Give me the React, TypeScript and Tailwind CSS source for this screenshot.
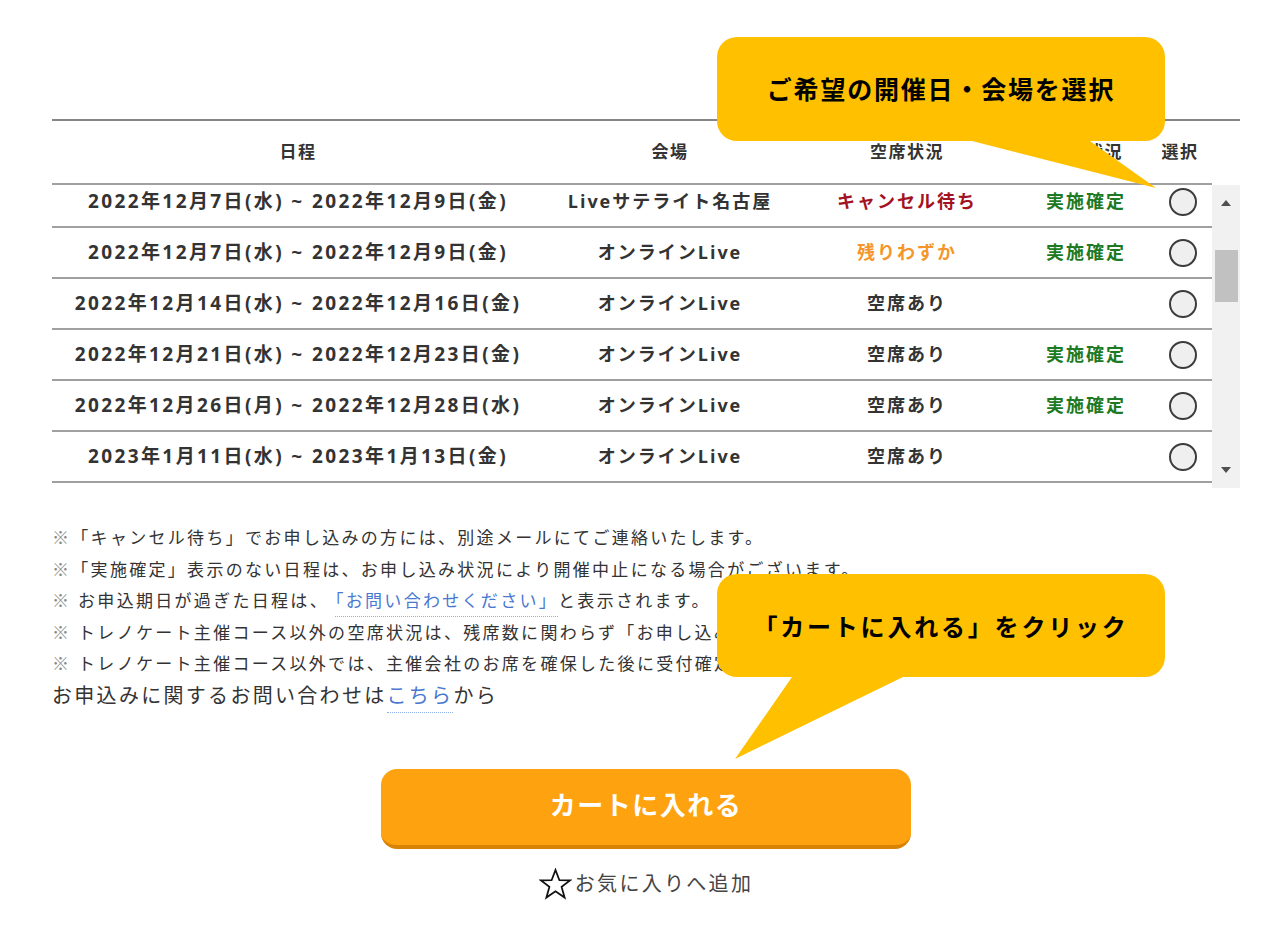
import React from 'react';

type Row = {
  date: string;
  venue: string;
  seat: string;
  seatTone: 'red' | 'orange' | 'plain';
  confirmed: boolean;
};

const rows: Row[] = [
  { date: '2022年12月7日(水) ~ 2022年12月9日(金)', venue: 'Liveサテライト名古屋', seat: 'キャンセル待ち', seatTone: 'red', confirmed: true },
  { date: '2022年12月7日(水) ~ 2022年12月9日(金)', venue: 'オンラインLive', seat: '残りわずか', seatTone: 'orange', confirmed: true },
  { date: '2022年12月14日(水) ~ 2022年12月16日(金)', venue: 'オンラインLive', seat: '空席あり', seatTone: 'plain', confirmed: false },
  { date: '2022年12月21日(水) ~ 2022年12月23日(金)', venue: 'オンラインLive', seat: '空席あり', seatTone: 'plain', confirmed: true },
  { date: '2022年12月26日(月) ~ 2022年12月28日(水)', venue: 'オンラインLive', seat: '空席あり', seatTone: 'plain', confirmed: true },
  { date: '2023年1月11日(水) ~ 2023年1月13日(金)', venue: 'オンラインLive', seat: '空席あり', seatTone: 'plain', confirmed: false },
];

const toneClass = {
  red: 'text-[#a3121f]',
  orange: 'text-[#f5962a]',
  plain: 'text-[#333]',
};

const gridCols = 'grid grid-cols-[492px_252px_222px_136px_58px]';

export default function App() {
  return (
    <div className="relative w-[1280px] h-[944px] bg-white text-[#333] font-['Open_Sans','Noto_Sans_CJK_JP',sans-serif] overflow-hidden">
      {/* table */}
      <div className="ml-[52px] mt-[119px] w-[1188px]">
        <div className="border-t-2 border-[#858585]">
          <div className={`${gridCols} w-[1160px] h-[64px] border-b-2 border-[#a0a0a0] items-center text-center text-[17px] font-bold tracking-[1.5px]`}>
            <div>日程</div>
            <div>会場</div>
            <div>空席状況</div>
            <div>開催状況</div>
            <div className="pr-[6px]">選択</div>
          </div>
        </div>

        <div className="flex h-[303px]">
          <div className="w-[1160px] h-[303px] overflow-hidden">
            <div className="-mt-[8px]">
              {rows.map((r, i) => (
                <div
                  key={i}
                  className={`${gridCols} h-[51px] border-b-2 border-[#a0a0a0] items-center text-center text-[18px] font-bold tracking-[2px]`}
                >
                  <div className="text-[19px] tracking-[2.4px]">{r.date}</div>
                  <div>{r.venue}</div>
                  <div className={toneClass[r.seatTone]}>{r.seat}</div>
                  <div className="text-[#1d7a23]">{r.confirmed ? '実施確定' : ''}</div>
                  <div className="flex justify-center">
                    <div className="w-[28px] h-[28px] rounded-full border-2 border-[#3c3c3c] bg-[#efefef]" />
                  </div>
                </div>
              ))}
            </div>
          </div>

          {/* fake scrollbar */}
          <div className="w-[28px] h-[303px] bg-[#f1f1f1] flex flex-col items-center">
            <svg width="10" height="6" viewBox="0 0 10 6" className="mt-[15px]">
              <path d="M0 6 L5 0 L10 6 Z" fill="#505050" />
            </svg>
            <div className="mt-[44px] w-[23px] h-[52px] bg-[#c1c1c1]" />
            <svg width="10" height="6" viewBox="0 0 10 6" className="mt-[165px]">
              <path d="M0 0 L5 6 L10 0 Z" fill="#505050" />
            </svg>
          </div>
        </div>
      </div>

      {/* notes */}
      <div className="ml-[52px] mt-[34px] text-[17px] leading-[31.5px] tracking-[2.3px] text-[#333] whitespace-nowrap">
        <p><span className="text-[#888]">※</span>「キャンセル待ち」でお申し込みの方には、別途メールにてご連絡いたします。</p>
        <p><span className="text-[#888]">※</span>「実施確定」表示のない日程は、お申し込み状況により開催中止になる場合がございます。</p>
        <p>
          <span className="text-[#888]">※</span> お申込期日が過ぎた日程は、
          <span className="text-[#4a78d0] border-b border-dotted border-[#8fb0e8] pb-[4px] ml-[6px]">「お問い合わせください」</span>
          と表示されます。
        </p>
        <p><span className="text-[#888]">※</span> トレノケート主催コース以外の空席状況は、残席数に関わらず「お申し込み可」と表示されます。</p>
        <p><span className="text-[#888]">※</span> トレノケート主催コース以外では、主催会社のお席を確保した後に受付確定となります。</p>
        <p className="text-[20px] tracking-[2.3px]">
          お申込みに関するお問い合わせは
          <span className="text-[#4a78d0] border-b border-dotted border-[#8fb0e8] pb-[3px]">こちら</span>
          から
        </p>
      </div>

      {/* cart */}
      <div className="ml-[381px] mt-[58px] w-[530px] flex flex-col items-center">
        <button className="w-[530px] h-[80px] rounded-[16px] bg-[#ffa20f] border-b-4 border-[#d98305] text-white text-[26px] font-bold tracking-[1.5px] pb-[4px]">
          カートに入れる
        </button>
        <div className="mt-[19px] flex items-center h-[32px] text-[20px] tracking-[2.3px] text-[#444]">
          <svg width="33" height="32" viewBox="0 0 33 32" className="mr-[3px]">
            <polygon
              points="16.5,2 20.4,12.2 31,12.4 22.6,18.9 25.6,29.5 16.5,23.3 7.4,29.5 10.4,18.9 2,12.4 12.6,12.2"
              fill="none"
              stroke="#111"
              strokeWidth="1.8"
              strokeLinejoin="miter"
            />
          </svg>
          お気に入りへ追加
        </div>
      </div>

      {/* callout: select date */}
      <div className="absolute left-[717px] top-[37px] w-[448px] h-[152px]">
        <svg width="448" height="152" viewBox="0 0 448 152" className="absolute left-0 top-0">
          <path
            d="M20 0 H428 A20 20 0 0 1 448 20 V84 A20 20 0 0 1 428 104 H373 L439 151 L255 104 H20 A20 20 0 0 1 0 84 V20 A20 20 0 0 1 20 0 Z"
            fill="#ffc000"
          />
        </svg>
        <div className="relative h-[104px] flex items-center justify-center text-black text-[25px] font-bold tracking-[1.8px] font-['Noto_Sans_CJK_JP',sans-serif]">
          ご希望の開催日・会場を選択
        </div>
      </div>

      {/* callout: cart */}
      <div className="absolute left-[717px] top-[574px] w-[448px] h-[186px]">
        <svg width="448" height="186" viewBox="0 0 448 186" className="absolute left-0 top-0">
          <path
            d="M20 0 H428 A20 20 0 0 1 448 20 V83 A20 20 0 0 1 428 103 H186 L18 185 L75 103 H20 A20 20 0 0 1 0 83 V20 A20 20 0 0 1 20 0 Z"
            fill="#ffc000"
          />
        </svg>
        <div className="relative h-[103px] flex items-center justify-center text-black text-[24px] font-bold tracking-[2.8px] font-['Noto_Sans_CJK_JP',sans-serif]">
          「カートに入れる」をクリック
        </div>
      </div>
    </div>
  );
}
